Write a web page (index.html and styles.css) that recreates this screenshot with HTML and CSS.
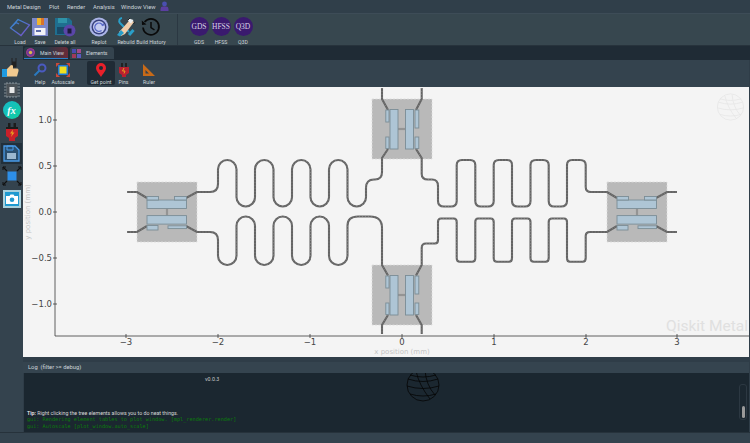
FILE: index.html
```html
<!DOCTYPE html>
<html lang="en">
<head>
<meta charset="utf-8">
<title>Qiskit Metal</title>
<link rel="stylesheet" href="styles.css">
</head>
<body>
<div class="app">
  <nav class="menubar">
    <span class="menu m1">Metal Design</span>
    <span class="menu m2">Plot</span>
    <span class="menu m3">Render</span>
    <span class="menu m4">Analysis</span>
    <span class="menu m5">Window View</span>
    <svg class="user" width="9" height="10" viewBox="0 0 9 10"><circle cx="4.5" cy="3" r="2.4" fill="#4a4fb0"/><path d="M.5 10V8Q.5 5.6 3 5.6H6Q8.500 5.600 8.500 8V10Z" fill="#5b3fa0"/></svg>
  </nav>

  <header class="toolbar">
    <div class="tool w20">
      <svg width="22" height="20" viewBox="0 0 22 20"><defs><linearGradient id="lg" x1="0" y1="0" x2="1" y2="1"><stop offset="0" stop-color="#2f8fd0"/><stop offset="1" stop-color="#7a4fc8"/></linearGradient></defs><path d="M1.500 11 9 2.500 20.500 8 12 18.500ZM4 8.500 7 5.500 10 7" fill="none" stroke="url(#lg)" stroke-width="1.300"/></svg>
      <span>Load</span>
    </div>
    <div class="tool w20">
      <svg width="20" height="20" viewBox="0 0 20 20"><path d="M2 1H18V19H2Z" fill="#7c88c9"/><path d="M7 1H14V8H7Z" fill="#efb52e"/><path d="M11 1H14V8H11Z" fill="#d9742b"/><path d="M4.500 11H15.500V18H4.500Z" fill="#f2f2f6"/><path d="M6 13H11V15H6Z" fill="#5b6aa8"/></svg>
      <span>Save</span>
    </div>
    <div class="tool w30">
      <svg width="22" height="20" viewBox="0 0 22 20"><path d="M1 1H15L18 4V18H1Z" fill="#1f6f8f"/><path d="M4 1H13V6H4Z" fill="#2f93a8"/><path d="M3 10H13V17H3Z" fill="#1a4a68"/><circle cx="15.500" cy="13.500" r="6" fill="#5a46a8"/><path d="M13.500 11.500H17.500V16.500H13.500Z" fill="#1c1c3c"/></svg>
      <span>Delete all</span>
    </div>
    <div class="tool w26 gap6">
      <svg width="20" height="20" viewBox="0 0 20 20"><circle cx="10" cy="10" r="9.500" fill="#aab4e6"/><circle cx="10" cy="10" r="7.500" fill="#39427f"/><circle cx="10" cy="10" r="6" fill="#c6cdf0"/><path d="M14 9A4.200 4.200 0 1 0 12.600 13.500" fill="none" stroke="#5a6ac8" stroke-width="1.200"/><path d="M12.300 8.600H15.600L14.600 6Z" fill="#5a6ac8"/></svg>
      <span>Replot</span>
    </div>
    <div class="tool w24 gap2">
      <svg width="20" height="20" viewBox="0 0 20 20"><path d="M6 1A3 3 0 0 0 4 6L13 15" fill="none" stroke="#2a9fc9" stroke-width="2"/><path d="M13 18 17.500 13" stroke="#2a9fc9" stroke-width="3"/><path d="M3 15 8.500 9 12 5 15 3 18 5 15 9 9 17 5 19Z" fill="#f0cdaa"/><path d="M13 1.500 17.500 3 15 6.500 12 4Z" fill="#eef1f4"/><path d="M1 18 5 13 8 16 4 19.500Z" fill="#2a9fc9"/><path d="M14 1 12 3M17.500 7 19 5" stroke="#222" stroke-width="1"/></svg>
      <span>Rebuild</span>
    </div>
    <div class="tool w26">
      <svg width="20" height="20" viewBox="0 0 20 20"><path d="M3.600 5A8 8 0 1 1 2 10.500" fill="none" stroke="#0a0a0a" stroke-width="1.700"/><path d="M.8 3.500 1 8 5.500 7.500Z" fill="#0a0a0a"/><path d="M10 5V10.500L13.500 13" fill="none" stroke="#0a0a0a" stroke-width="1.500"/></svg>
      <span>Build History</span>
    </div>
    <div class="sep"></div>
    <div class="tool w22"><span class="orb">GDS</span><span>GDS</span></div>
    <div class="tool w22"><span class="orb">HFSS</span><span>HFSS</span></div>
    <div class="tool w22"><span class="orb">Q3D</span><span>Q3D</span></div>
  </header>

  <div class="body">
    <aside class="sidebar">
      <svg class="side s-thumb" width="18" height="24" viewBox="0 0 18 24"><path d="M11 1V5M15 1V5M11 5H15V10H11Z" fill="#222" stroke="#222"/><path d="M1 12H6V20H1Z" fill="#1f9ae0"/><path d="M6 12 10 8 12 8.500V11.500H16.500Q18 12 17.500 14L16 19.500H6Z" fill="#f0c98f"/></svg>
      <svg class="side s-chip" width="18" height="16" viewBox="0 0 18 16"><path d="M1 2H17M1 5H17M1 8H17M1 11H17M1 14H17M4 0V16M7 0V16M10 0V16M13 0V16" stroke="#8d969c" stroke-width=".9"/><path d="M3.500 2H14.500V14H3.500Z" fill="#4c5358"/><path d="M6.500 5H11.500V11H6.500Z" fill="#e8e8e8"/></svg>
      <div class="fx"><span>fx</span></div>
      <svg class="side s-plug" width="14" height="18" viewBox="0 0 14 18"><path d="M3 0H5.500V5H3ZM8.500 0H11V5H8.500Z" fill="#1c1c1c"/><path d="M1 4H13V6H1Z" fill="#1c1c1c"/><path d="M1 6H13V13L10 15V18H4V15L1 13Z" fill="#c8202a"/><path d="M8 6.500 5 10.500H7L6 14 9.500 9.500H7.500Z" fill="#e8a020"/></svg>
      <div class="side-active"><svg width="17" height="17" viewBox="0 0 17 17"><path d="M1 1H12L16 5V16H1Z" fill="#2a5070" stroke="#4a9be8" stroke-width="1.300"/><path d="M4 8H13V14H4Z" fill="#9ab8d0"/><path d="M4 1H10V5H4Z" fill="none" stroke="#4a9be8"/></svg></div>
      <svg class="side s-exp" width="20" height="20" viewBox="0 0 20 20"><path d="M5.500 5.500H14.500V14.500H5.500Z" fill="#2d8fe8"/><path d="M1 1 5 5M19 1 15 5M1 19 5 15M19 19 15 15" stroke="#111" stroke-width="1.100"/><path d="M1 4V1H4M16 1H19V4M1 16V19H4M16 19H19V16" fill="none" stroke="#111" stroke-width="1"/></svg>
      <div class="cam"><svg width="12" height="10" viewBox="0 0 12 10"><path d="M0 2H3.500L4.500 .5H7.500L8.500 2H12V10H0Z" fill="#fff"/><circle cx="6" cy="5.800" r="2.300" fill="#1f9ad0"/></svg></div>
    </aside>

    <main class="content">
      <div class="tabbar">
        <div class="tab active">
          <svg width="9" height="9" viewBox="0 0 9 9"><circle cx="4.500" cy="4.500" r="4" fill="#6a3a9a" stroke="#b03a8a"/><circle cx="4.500" cy="4.500" r="1.700" fill="#d8b84a"/></svg>
          <span>Main View</span>
        </div>
        <div class="tab">
          <svg width="9" height="9" viewBox="0 0 9 9"><path d="M0 0H4V4H0Z" fill="#4a4ab0"/><path d="M5 0H9V4H5Z" fill="#a04a8a"/><path d="M0 5H4V9H0Z" fill="#a03a5a"/><path d="M5 5H9V9H5Z" fill="#5a5ac0"/></svg>
          <span>Elements</span>
        </div>
      </div>

      <div class="subbar">
        <div class="sub w24">
          <svg width="14" height="14" viewBox="0 0 14 14"><circle cx="9" cy="5" r="3.500" fill="none" stroke="#4a5ac0" stroke-width="2"/><path d="M6.500 7.500 1.500 12.500" stroke="#2a7ac0" stroke-width="2"/></svg>
          <span>Help</span>
        </div>
        <div class="sub w22">
          <svg width="14" height="14" viewBox="0 0 14 14"><path d="M0 0H4L0 4ZM14 0V4L10 0ZM0 14V10L4 14ZM14 14H10L14 10Z" fill="#c84a3a"/><path d="M2 2H12V12H2Z" fill="#1f7ad8"/><path d="M3.500 3.500H10.500V10.500H3.500Z" fill="#f2e020"/></svg>
          <span>Autoscale</span>
        </div>
        <div class="sub w28 on">
          <svg width="10" height="14" viewBox="0 0 10 14"><path fill-rule="evenodd" d="M5 0A5 5 0 0 1 10 5C10 8 7 10.500 5 14 3 10.500 0 8 0 5A5 5 0 0 1 5 0ZM5 3A2 2 0 1 0 5 7 2 2 0 0 0 5 3Z" fill="#e8202a"/></svg>
          <span>Get point</span>
        </div>
        <div class="sub w17">
          <svg width="10" height="14" viewBox="0 0 10 14"><path d="M2 0H4V4H2ZM6 0H8V4H6Z" fill="#222"/><path d="M0 4H10V10L7 12V14H3V12L0 10Z" fill="#b82030"/><path d="M5 5 3.500 8H6L5 10.500" fill="none" stroke="#e8a020"/></svg>
          <span>Pins</span>
        </div>
        <div class="sub w34">
          <svg width="14" height="14" viewBox="0 0 14 14"><path fill-rule="evenodd" d="M1 1 13 13H1ZM3.500 7V10.500H7Z" fill="#c86a18"/></svg>
          <span>Ruler</span>
        </div>
      </div>

      <div class="canvas">
        <svg class="plot" width="726" height="270" viewBox="23 87 726 270">
          <defs>
            <g id="wires">
              <path d="M127 192H137L147 198"/>
              <path d="M186 198L197 192H210Q218 192 218 184V169.250A9.250 9.250 0 0 1 236.500 169.250V197.250A9.250 9.250 0 0 0 255 197.250V169.250A9.250 9.250 0 0 1 273.500 169.250V197.250A9.250 9.250 0 0 0 292 197.250V169.250A9.250 9.250 0 0 1 310.500 169.250V197.250A9.250 9.250 0 0 0 329 197.250V169.250A9.250 9.250 0 0 1 347.500 169.250V197.250A9.250 9.250 0 0 0 366 197.250V188Q366 179.500 374 179.500H375Q382 179.500 382 172V158L388 149"/>
              <path d="M127 232H137L147 226"/>
              <path d="M186 226L197 232H210Q218 232 218 240V255.750A9.250 9.250 0 0 0 236.500 255.750V225.750A9.250 9.250 0 0 1 255 225.750V255.750A9.250 9.250 0 0 0 273.500 255.750V225.750A9.250 9.250 0 0 1 292 225.750V255.750A9.250 9.250 0 0 0 310.500 255.750V225.750A9.250 9.250 0 0 1 329 225.750V255.750A9.250 9.250 0 0 0 347.500 255.750V225.750Q347.500 216.500 358 216.500H370Q382 216.500 382 228V265L388 275.500"/>
              <path d="M382 88V99L388 110"/>
              <path d="M421.700 88V99L416 110"/>
              <path d="M388 315L382 325V334"/>
              <path d="M416 315L421.700 325V334"/>
              <path d="M416 149L421.700 158V174Q421.700 179.500 428 179.500H432Q438 179.500 438 186V201Q438 206.500 444 206.500H451Q456.700 206.500 456.700 201V165Q456.700 160 462 160H470Q475.300 160 475.300 165V201Q475.300 206.500 481 206.500H488Q493.700 206.500 493.700 201V165Q493.700 160 499 160H507Q512 160 512 165V201Q512 206.500 518 206.500H525Q530.500 206.500 530.500 201V165Q530.500 160 536 160H543Q548.700 160 548.700 165V201Q548.700 206.500 554 206.500H561Q567 206.500 567 201V165Q567 160 572 160H580Q585.700 160 585.700 165V187Q585.700 192 591 192H607L617 198"/>
              <path d="M416 275.500L421.700 265V248Q421.700 243.500 426 243.500H435Q438 243.500 438 240V222Q438 218.500 441 218.500H453.700Q456.700 218.500 456.700 222V258Q456.700 261.800 460 261.800H472Q475.300 261.800 475.300 258V222Q475.300 218.500 478 218.500H490.700Q493.700 218.500 493.700 222V258Q493.700 261.800 497 261.800H509Q512 261.800 512 258V222Q512 218.500 515 218.500H527.500Q530.500 218.500 530.500 222V258Q530.500 261.800 534 261.800H545.700Q548.700 261.800 548.700 258V222Q548.700 218.500 552 218.500H564Q567 218.500 567 222V258Q567 261.800 570 261.800H582.700Q585.700 261.800 585.700 258V236Q585.700 232 590 232H607L617 226"/>
              <path d="M656 198L667 192H677"/>
              <path d="M656 226L667 232H677"/>
            </g>
            <g id="hq">
              <path class="jj" d="M167 208.500V215.600"/>
              <rect class="pad" x="147" y="200" width="39.500" height="8.500"/>
              <rect class="pad" x="147" y="215.600" width="39.500" height="8.500"/>
              <rect class="pad" x="147" y="196.500" width="11.500" height="3.500"/>
              <rect class="pad" x="174.500" y="196.500" width="12" height="3.500"/>
              <rect class="pad" x="147" y="225.500" width="11" height="4.500"/>
              <rect class="pad" x="168" y="225.800" width="18.500" height="2.800"/>
            </g>
            <g id="vq">
              <path class="jj" d="M398 129H405.500"/>
              <rect class="pad" x="390" y="109.500" width="8" height="39.500"/>
              <rect class="pad" x="405.500" y="109.500" width="8" height="39.500"/>
              <rect class="pad" x="385.800" y="110" width="3.200" height="12"/>
              <rect class="pad" x="385.800" y="137" width="3.200" height="11.500"/>
              <rect class="pad" x="415" y="110" width="3.800" height="18"/>
              <rect class="pad" x="415" y="137" width="3.800" height="11.500"/>
            </g>
            <g id="globe">
              <circle cx="0" cy="0" r="16"/>
              <path d="M-15 -6Q0 -1 15 -6M-16 1Q0 6 16 1M-13 9Q0 13 13 9M-13 -10Q0 -6 13 -10M-7 -14Q-4 0 7 14M2 -15Q3 0 12 10"/>
            </g>
          </defs>

          <rect class="pocket" x="137" y="182" width="60" height="60"/>
          <rect class="pocket" x="607" y="182" width="60" height="60"/>
          <rect class="pocket" x="372" y="99" width="60" height="60"/>
          <rect class="pocket" x="372" y="265" width="60" height="60"/>

          <use href="#wires" class="wire-base"/>
          <use href="#wires" class="wire-dash"/>

          <use href="#hq"/>
          <use href="#hq" x="470"/>
          <use href="#vq"/>
          <use href="#vq" y="166"/>

          <g class="globe-mark" transform="translate(730.500 107) scale(.82)"><use href="#globe"/></g>
          <text class="brand" x="748" y="331">Qiskit Metal</text>

          <path class="axis" d="M55 87V336H749"/>
          <path class="axis" d="M53 120H57M53 166H57M53 212H57M53 258H57M53 304H57M126 334V338M218 334V338M310 334V338M402 334V338M494 334V338M586 334V338M677 334V338"/>

          <g class="ytick">
            <text x="52" y="123">1.0</text>
            <text x="52" y="169">0.5</text>
            <text x="52" y="215">0.0</text>
            <text x="52" y="261">−0.5</text>
            <text x="52" y="307">−1.0</text>
          </g>
          <g class="xtick">
            <text x="126" y="345">−3</text>
            <text x="218" y="345">−2</text>
            <text x="310" y="345">−1</text>
            <text x="402" y="345">0</text>
            <text x="494" y="345">1</text>
            <text x="586" y="345">2</text>
            <text x="677" y="345">3</text>
          </g>
          <text class="axlabel" x="402" y="354">x position (mm)</text>
          <text class="axlabel" transform="translate(30 212) rotate(-90)">y position (mm)</text>
        </svg>
      </div>

      <div class="logtitle">Log&nbsp; (filter &gt;= debug)</div>
      <section class="log">
        <div class="version">v0.0.3</div>
        <div class="logtext">
          <p class="tip"><b>Tip:</b> Right clicking the tree elements allows you to do neat things.</p>
          <p class="out">gui: Rendering element tables to plot window. [mpl_renderer.render]</p>
          <p class="out">gui: Autoscale [plot_window.auto_scale]</p>
        </div>
        <svg class="logglobe" width="36" height="36" viewBox="-18 -18 36 36"><use href="#globe"/></svg>
        <div class="scroll"><div class="thumb"></div></div>
      </section>
    </main>
  </div>

  <footer class="status"></footer>
</div>
</body>
</html>
```

FILE: styles.css
```css
* { box-sizing: border-box; }
html, body { margin: 0; padding: 0; background: #34434e; }
p { margin: 0; }

.app {
  width: 750px;
  height: 443px;
  display: flex;
  flex-direction: column;
  overflow: hidden;
  font-family: "Roboto", "Liberation Sans", sans-serif;
  font-size: 6px;
  color: #ced5da;
}

.menubar {
  height: 14px;
  flex: none;
  display: flex;
  align-items: center;
  padding-left: 7px;
  background: #303f4a;
  border-bottom: 1px solid #3d4c57;
}
.menu { font-size: 5.800px; white-space: nowrap; }
.m1 { width: 42px; }
.m2 { width: 18px; }
.m3 { width: 26px; }
.m4 { width: 28px; }
.m5 { width: 39px; }
.user { margin-top: -1px; }

.toolbar {
  height: 32px;
  flex: none;
  display: flex;
  padding-left: 10px;
  background: #37474f;
  border-bottom: 1px solid #27333c;
}
.tool {
  display: flex;
  flex-direction: column;
  align-items: center;
  justify-content: flex-start;
  padding-top: 3px;
  height: 31px;
  white-space: nowrap;
  font-size: 5.200px;
}
.tool svg { flex: none; height: 20px; }
.tool span:last-child { margin-top: 2px; line-height: 7px; }
.w20 { width: 20px; }
.w22 { width: 22px; }
.w24 { width: 24px; }
.w26 { width: 26px; }
.w30 { width: 30px; }
.gap6 { margin-left: 6px; }
.gap2 { margin-left: 2px; }
.sep {
  width: 1px;
  height: 31px;
  margin: 0 10px 0 13px;
  background: #2b3842;
}
.orb {
  width: 19px;
  height: 19px;
  flex: none;
  border-radius: 50%;
  background: #3a1a6e;
  display: flex;
  align-items: center;
  justify-content: center;
  margin-bottom: 1px;
  font-family: "Liberation Serif", serif;
  font-size: 7.500px;
  color: #d8d4e4;
}

.body { flex: 1; min-height: 0; display: flex; }

.sidebar {
  width: 23px;
  flex: none;
  background: #34434e;
  display: flex;
  flex-direction: column;
  align-items: center;
  padding-top: 11px;
}
.side { flex: none; }
.s-thumb { margin: 0 3px 0 0; }
.s-chip { margin-top: 1px; }
.fx {
  width: 18px;
  height: 18px;
  flex: none;
  margin-top: 3px;
  border-radius: 50%;
  background: linear-gradient(135deg, #18b8c8, #10d0a0);
  display: flex;
  align-items: center;
  justify-content: center;
  font-family: "Liberation Serif", serif;
  font-style: italic;
  font-weight: bold;
  font-size: 10px;
  color: #fff;
}
.s-plug { margin-top: 4px; }
.side-active {
  width: 21px;
  height: 21px;
  flex: none;
  margin-top: 2px;
  background: #22303b;
  display: flex;
  align-items: center;
  justify-content: center;
}
.s-exp { margin-top: 2px; }
.cam {
  width: 18px;
  height: 18px;
  flex: none;
  margin-top: 4px;
  border: 2px solid #a8d0dc;
  background: #1f9ad0;
  display: flex;
  align-items: center;
  justify-content: center;
}

.content {
  flex: 1;
  min-width: 0;
  display: flex;
  flex-direction: column;
  padding-right: 1px;
  background: #2f3d48;
}

.tabbar {
  height: 14px;
  flex: none;
  margin-right: -1px;
  display: flex;
  gap: 2px;
  padding: 1px 0 0 1px;
  background: #1f2b35;
}
.tab {
  height: 12px;
  width: 44px;
  display: flex;
  align-items: center;
  gap: 5px;
  padding-left: 2px;
  border-radius: 3px 3px 0 0;
  background: #34434e;
  font-size: 5.200px;
}
.tab.active {
  background: linear-gradient(90deg, #2a3a48 50%, #6a2a38);
  border-bottom: 1px solid #2a80c8;
}

.subbar {
  height: 27px;
  flex: none;
  display: flex;
  padding: 1px 0 2px 5px;
  background: #34434e;
}
.sub {
  display: flex;
  flex-direction: column;
  align-items: center;
  padding-top: 2px;
  white-space: nowrap;
  font-size: 5.200px;
  border-radius: 2px;
}
.sub svg { flex: none; }
.sub span { margin-top: 2px; line-height: 7px; }
.w17 { width: 17px; }
.w28 { width: 28px; }
.w34 { width: 34px; }
.on { background: #1f2b35; margin-left: 13px; }

.canvas { height: 270px; flex: none; background: #f4f4f4; }
.plot { display: block; }

.pocket { fill: #b9b9b9; stroke: #dcdcdc; stroke-width: .8; stroke-dasharray: 2 1.500; }
.wire-base { fill: none; stroke: #646464; stroke-width: 2.100; }
.wire-dash { fill: none; stroke: #8a8a8a; stroke-width: .8; stroke-dasharray: 1 2; }
.pad { fill: #aec5d5; stroke: #7b8d96; stroke-width: .9; }
.jj { fill: none; stroke: #949494; stroke-width: 2.200; }
.axis { fill: none; stroke: #3a3a3a; stroke-width: .8; }
.ytick text { font-family: "DejaVu Sans", sans-serif; font-size: 8.500px; fill: #444; text-anchor: end; }
.xtick text { font-family: "DejaVu Sans", sans-serif; font-size: 8.500px; fill: #444; text-anchor: middle; }
.axlabel { font-family: "DejaVu Sans", sans-serif; font-size: 7px; fill: #c4c4c4; text-anchor: middle; }
.brand { font-family: "Roboto", sans-serif; font-size: 15.500px; font-weight: 400; fill: #e0e0e0; text-anchor: end; }
.globe-mark { fill: none; stroke: #e6e6e6; stroke-width: 1; }

.logtitle {
  height: 11px;
  flex: none;
  margin-top: 5px;
  padding: 1px 0 0 5px;
  background: #35444f;
  font-size: 5.800px;
  line-height: 9px;
}
.log {
  height: 59px;
  flex: none;
  position: relative;
  margin-left: 1px;
  display: flex;
  flex-direction: column;
  justify-content: space-between;
  padding: 3px 0 2px 3px;
  background: #1b2730;
  overflow: hidden;
}
.version { margin-left: 178px; font-size: 5.300px; line-height: 7px; color: #c8c8c8; }
.tip { font-size: 5.250px; line-height: 6px; color: #d8d8d8; }
.tip b { font-weight: 500; color: #f2f2f2; }
.out { font-family: "DejaVu Sans Mono", monospace; font-size: 5.200px; line-height: 7px; color: #0b7d0b; white-space: nowrap; }
.logglobe {
  position: absolute;
  left: 381px;
  top: -6px;
  fill: none;
  stroke: #050505;
  stroke-width: .8;
}
.scroll {
  position: absolute;
  left: 715px;
  top: 11px;
  width: 8px;
  height: 36px;
  padding: 21px 1.500px 1px;
  border: 1px solid #2c3842;
  border-radius: 3px;
}
.thumb { width: 100%; height: 100%; border-radius: 2px; background: #9a9a9a; }

.status {
  height: 11px;
  flex: none;
  background: #34434e;
  border-top: 1px solid #26323b;
}
```
